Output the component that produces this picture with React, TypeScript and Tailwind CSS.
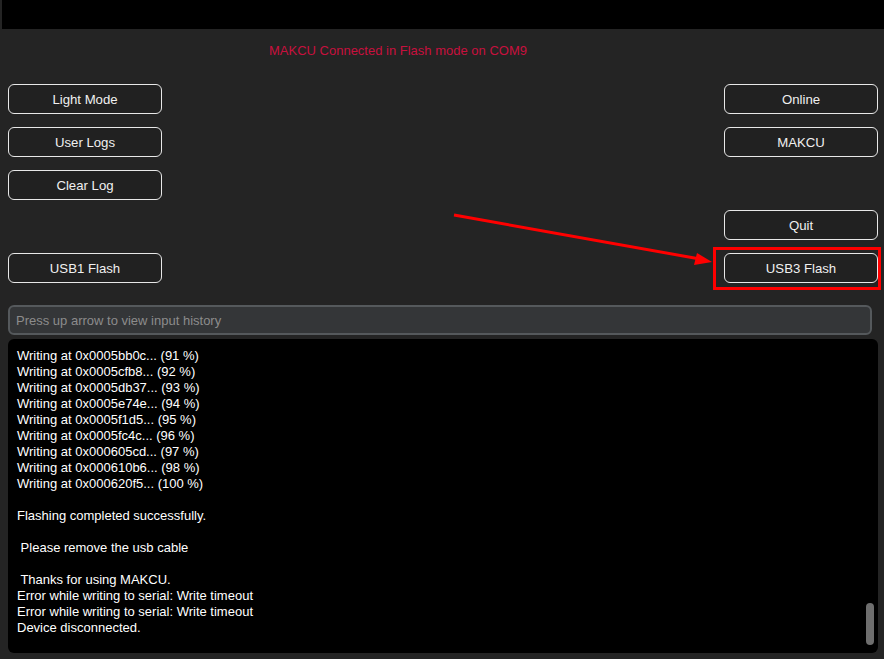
import React from "react";

const logLines = [
  "Writing at 0x0005bb0c... (91 %)",
  "Writing at 0x0005cfb8... (92 %)",
  "Writing at 0x0005db37... (93 %)",
  "Writing at 0x0005e74e... (94 %)",
  "Writing at 0x0005f1d5... (95 %)",
  "Writing at 0x0005fc4c... (96 %)",
  "Writing at 0x000605cd... (97 %)",
  "Writing at 0x000610b6... (98 %)",
  "Writing at 0x000620f5... (100 %)",
  "",
  "Flashing completed successfully.",
  "",
  " Please remove the usb cable",
  "",
  " Thanks for using MAKCU.",
  "Error while writing to serial: Write timeout",
  "Error while writing to serial: Write timeout",
  "Device disconnected.",
];

const Btn: React.FC<{ label: string; className?: string }> = ({ label, className }) => (
  <button
    className={
      "w-[154px] h-[30px] rounded-[6px] border-[1.5px] border-[#e8e8e8] bg-[#212121] pt-[2px] text-[13.2px] text-[#f0f0f0] flex items-center justify-center " +
      (className ?? "")
    }
  >
    {label}
  </button>
);

export default function App() {
  return (
    <div
      className="w-[884px] h-[659px] bg-[#242424] relative overflow-hidden"
      style={{ fontFamily: '"Liberation Sans", Arial, sans-serif' }}
    >
      <div className="h-[29px] bg-black ml-[2px]" />

      <div className="h-[41px] pl-[269px] pt-[12px] text-[13px] text-[#c8103e]">
        MAKCU Connected in Flash mode on COM9
      </div>

      <div className="flex justify-between pl-[8px] pr-[6px] pt-[14px]">
        <div className="flex flex-col">
          <Btn label="Light Mode" />
          <Btn label="User Logs" className="mt-[13px]" />
          <Btn label="Clear Log" className="mt-[13px]" />
          <Btn label="USB1 Flash" className="mt-[53px]" />
        </div>
        <div className="flex flex-col">
          <Btn label="Online" />
          <Btn label="MAKCU" className="mt-[13px]" />
          <Btn label="Quit" className="mt-[53px]" />
          <Btn label="USB3 Flash" className="mt-[13px]" />
        </div>
      </div>

      <div className="mx-[8px] mt-[22px] w-[864px] h-[30px] rounded-[6px] border-2 border-[#55595c] bg-[#343638] flex items-center px-[6px] pt-[1px] text-[13px] text-[#8c8c8c]">
        Press up arrow to view input history
      </div>

      <div className="relative mx-[8px] mt-[4px] w-[870px] h-[314px] rounded-[6px] bg-black pt-[9px] pl-[9px]">
        {logLines.map((l, i) => (
          <div key={i} className="h-[16px] leading-[16px] text-[13px] text-white whitespace-pre">
            {l}
          </div>
        ))}
        <div className="absolute right-[4px] top-[264px] w-[8px] h-[42px] rounded-full bg-[#6e6e6e]" />
      </div>

      {/* annotation overlay */}
      <div className="absolute left-[713px] top-[247px] w-[168px] h-[43px] border-[3px] border-[#ff0000]" />
      <svg className="absolute left-0 top-0 pointer-events-none" width="884" height="659">
        <line x1="454" y1="215" x2="700" y2="259" stroke="#ff0000" strokeWidth="3" />
        <polygon points="712,262 697,253 694,265" fill="#ff0000" />
      </svg>
    </div>
  );
}
